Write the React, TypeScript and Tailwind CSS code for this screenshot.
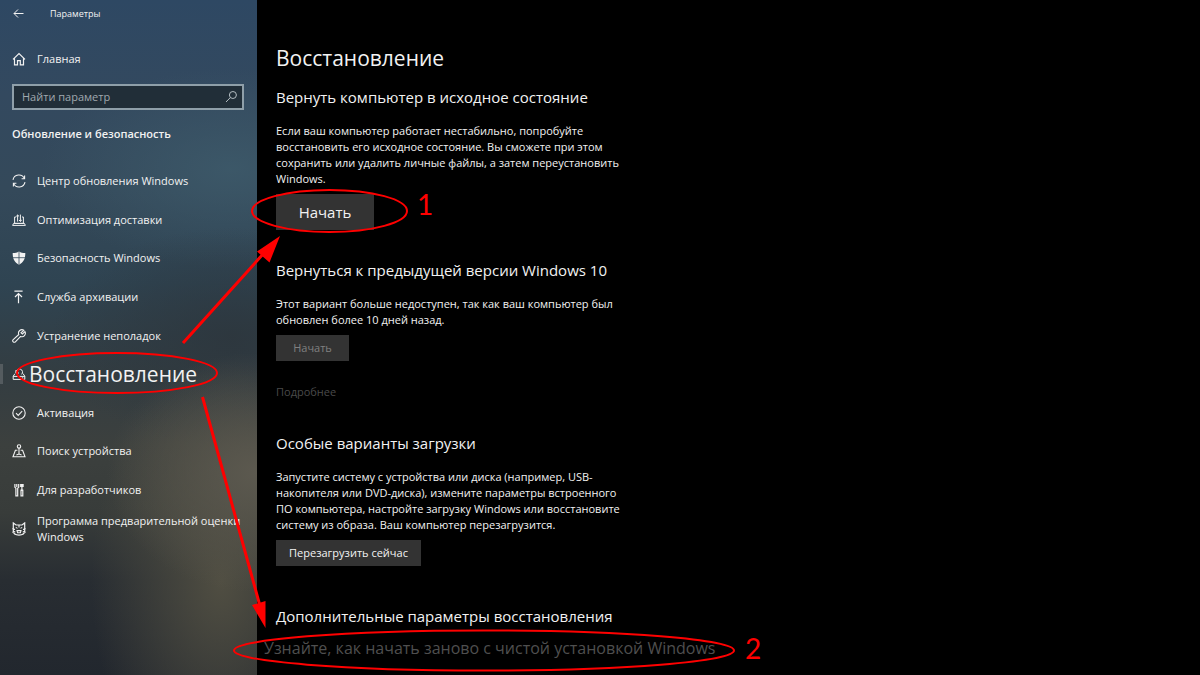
import React from 'react';

const Icon = ({ children, className = '' }: { children: React.ReactNode; className?: string }) => (
  <svg
    viewBox="0 0 14 14"
    fill="none"
    stroke="currentColor"
    strokeWidth="1"
    className={`h-3.5 w-3.5 shrink-0 ${className}`}
    aria-hidden="true"
  >
    {children}
  </svg>
);

const BackIcon = () => (
  <Icon>
    <path d="M11.500 6.500H2M6 2.500l-4 4 4 4" />
  </Icon>
);

const HomeIcon = () => (
  <Icon>
    <path d="M1 7.4L7 1.6l6 5.8M2.500 6.200v6.600h3V8.600h2.800v4.200h3.200V6.200" strokeWidth="1.200" />
  </Icon>
);

const SearchIcon = () => (
  <Icon className="text-[#b4bdc2]">
    <circle cx="8.900" cy="5" r="3.500" />
    <path d="M6.400 7.500L2 12" />
  </Icon>
);

const SyncIcon = () => (
  <Icon>
    <path d="M1 5.8A6 6 0 0 1 12.4 4.6M12.6 1.6v3.2H9.6M13 8.2A6 6 0 0 1 1.6 9.4M1.4 12.4V9.2h3" strokeWidth="1.1" />
  </Icon>
);

const DeliveryIcon = () => (
  <Icon>
    <path d="M4 4H2.6v6.4h8.8V4H10M0.6 12.4h12.8l-1-2H1.6zM5.6 8.6V2M4.2 3.4L5.6 2 7 3.4M8.4 1.6v6.8M7 7l1.4 1.4L9.8 7" />
  </Icon>
);

const ShieldIcon = () => (
  <Icon>
    <path
      d="M7 .4c1.800 1.200 3.800 1.600 6.300 1.700 0 5.400-1.400 9-6.300 11.600C2.100 11.100.7 7.500.7 2.100 3.200 2 5.200 1.600 7 .4z"
      fill="currentColor"
      stroke="none"
    />
    <path d="M7 .6v13M1 6.700h12" stroke="#34495a" strokeWidth="0.8" />
  </Icon>
);

const BackupIcon = () => (
  <Icon>
    <path d="M2.4 1.200h8.200M6.500 13.200V3.600M3 7l3.500-3.500L10 7" strokeWidth="1.2" />
  </Icon>
);

const WrenchIcon = () => (
  <Icon>
    <path
      d="M11.800 1.300a3.400 3.400 0 0 0-5 4.200L1.200 10.600a1.500 1.500 0 0 0 2.200 2.200L8.600 7.400a3.400 3.400 0 0 0 4.300-4.800L10.400 5 9 3.800z"
      strokeWidth="1.1"
    />
  </Icon>
);

const RecoveryIcon = () => (
  <Icon>
    <path d="M3 6.600L1.200 9.200v3.200h11.600V9.200L11 6.600M1.200 9.400h11.600M4.200 5.800a3.200 3.200 0 1 1 5.400 1.600M4 3v3h3M9.800 10.900h1.400" />
  </Icon>
);

const ActivationIcon = () => (
  <Icon>
    <circle cx="7" cy="7" r="6.200" strokeWidth="1.100" />
    <path d="M4 7.200l2.200 2.200 4-4.200" strokeWidth="1.100" />
  </Icon>
);

const FindDeviceIcon = () => (
  <Icon>
    <circle cx="7" cy="2.400" r="1.700" strokeWidth="1.100" />
    <path d="M7 4.100v6M5.400 6.200H3.400L1 12.800h12L10.600 6.200h-2M4.400 11l2.600-1 2.600 1" strokeWidth="1.100" />
  </Icon>
);

const DeveloperIcon = () => (
  <Icon>
    <path d="M2.900 1v3.200l1 1v7.600h1.800V5.200l1-1V1M4.800 1v3" strokeWidth="1.200" />
    <path d="M9.900 1v6M8.500 7h2.800M9 7.500h1.800v5.300H9zM8.700 1.500h2.400v2H8.700z" strokeWidth="1.200" />
  </Icon>
);

// ninja cat head
const InsiderIcon = () => (
  <Icon>
    <path
      d="M1.300.9L4 3h6l2.700-2.100v7.900c0 2.600-2 4.300-5.700 4.300s-5.700-1.700-5.700-4.300zM.4 6.600l2.600.8M13.600 6.600l-2.600.8M.4 10.400l2.800-.8M13.600 10.400l-2.800-.8"
      strokeWidth="1.200"
    />
    <path d="M5 8.600h4l-.6 2.200H5.600zM3.800 5.400l1.700 1M10.200 5.400l-1.700 1M7 3v2.400" strokeWidth="1.100" />
  </Icon>
);

interface NavItem {
  label: string;
  icon: React.FC;
  active?: boolean;
}

const navItems: NavItem[] = [
  { label: 'Центр обновления Windows', icon: SyncIcon },
  { label: 'Оптимизация доставки', icon: DeliveryIcon },
  { label: 'Безопасность Windows', icon: ShieldIcon },
  { label: 'Служба архивации', icon: BackupIcon },
  { label: 'Устранение неполадок', icon: WrenchIcon },
  { label: 'Восстановление', icon: RecoveryIcon, active: true },
  { label: 'Активация', icon: ActivationIcon },
  { label: 'Поиск устройства', icon: FindDeviceIcon },
  { label: 'Для разработчиков', icon: DeveloperIcon },
  { label: 'Программа предварительной оценки\nWindows', icon: InsiderIcon },
];

const Sidebar = () => (
  <aside className="w-[257px] shrink-0 bg-[radial-gradient(ellipse_150px_120px_at_100%_70%,#5c594f,#5c594f00),radial-gradient(ellipse_130px_220px_at_86%_86%,#504e42,#504e4200),radial-gradient(ellipse_180px_110px_at_90%_50%,#2c353ccc,#2c353c00),radial-gradient(ellipse_190px_100px_at_90%_25%,#3e5b6bcc,#3e5b6b00),linear-gradient(180deg,#2e4863_0%,#33495f_14%,#34495a_28%,#2f4452_42%,#333d42_55%,#3c403e_66%,#383c3a_76%,#282d32_86%,#22272e_100%)]">
    <header className="flex h-[27px] items-center gap-6 pl-3">
      <button aria-label="Назад">
        <BackIcon />
      </button>
      <span className="text-[9px]">Параметры</span>
    </header>
    <a href="#home" className="mt-5 flex h-6 items-center gap-[11px] pl-3">
      <HomeIcon />
      Главная
    </a>
    <label className="mt-[13px] mr-[13px] ml-3 flex h-[26px] items-center border-2 border-[#8f9fa9] bg-[#212e38] pr-1 pl-2">
      <input
        type="text"
        placeholder="Найти параметр"
        aria-label="Найти параметр"
        className="min-w-0 flex-1 bg-transparent outline-none placeholder:text-[#a0a9af]"
      />
      <SearchIcon />
    </label>
    <h2 className="mt-4 pl-3 leading-4 font-semibold">Обновление и безопасность</h2>
    <nav className="mt-5 grid h-[386px] auto-rows-fr">
      {navItems.map(({ label, icon: ItemIcon, active }) => (
        <a
          key={label}
          href="#section"
          className={`flex items-center pl-3 leading-4 whitespace-pre ${
            active ? 'relative gap-[3px] text-[21px]' : 'gap-[11px]'
          }`}
        >
          {active && <span className="absolute left-0 h-5 w-[3px] bg-[#545b5f]" />}
          <ItemIcon />
          {label}
        </a>
      ))}
    </nav>
  </aside>
);

interface SectionProps {
  title: string;
  text: string;
  className?: string;
  children: React.ReactNode;
}

const Section = ({ title, text, className = '', children }: SectionProps) => (
  <section className={className}>
    <h2 className="text-[15px] leading-6">{title}</h2>
    <p className="mt-3.5 mb-[7px] leading-4 whitespace-pre-line">{text}</p>
    {children}
  </section>
);

const Content = () => (
  <main className="min-w-0 flex-1 pt-[42px] pl-[19px]">
    <h1 className="text-[21px] leading-8">Восстановление</h1>
    <Section
      className="mt-[11px]"
      title="Вернуть компьютер в исходное состояние"
      text={
        'Если ваш компьютер работает нестабильно, попробуйте\nвосстановить его исходное состояние. Вы сможете при этом\nсохранить или удалить личные файлы, а затем переустановить\nWindows.'
      }
    >
      <button className="block h-9 w-[98px] bg-[#333333] text-[15px]">Начать</button>
    </Section>
    <Section
      className="mt-7"
      title="Вернуться к предыдущей версии Windows 10"
      text={'Этот вариант больше недоступен, так как ваш компьютер был\nобновлен более 10 дней назад.'}
    >
      <button disabled className="block h-[26px] w-[73px] bg-[#333333] text-[#808080]">
        Начать
      </button>
      <a href="#more" className="mt-[23px] block leading-4 text-[#4a4a4a]">
        Подробнее
      </a>
    </Section>
    <Section
      className="mt-[31px]"
      title="Особые варианты загрузки"
      text={
        'Запустите систему с устройства или диска (например, USB-\nнакопителя или DVD-диска), измените параметры встроенного\nПО компьютера, настройте загрузку Windows или восстановите\nсистему из образа. Ваш компьютер перезагрузится.'
      }
    >
      <button className="block h-[26px] w-[145px] bg-[#333333]">Перезагрузить сейчас</button>
    </Section>
    <section className="mt-[38px]">
      <h2 className="text-[15px] leading-6">Дополнительные параметры восстановления</h2>
      <a href="#clean-install" className="mt-2 -ml-3 block text-base leading-6 text-[#4f4f4f]">
        Узнайте, как начать заново с чистой установкой Windows
      </a>
    </section>
  </main>
);

const Annotations = () => (
  <div className="pointer-events-none absolute top-0 left-0 font-['Lato',sans-serif] text-[28px] leading-8 text-[#ff0000]">
    <svg width="760" height="675" viewBox="0 0 760 675" fill="none" stroke="currentColor" aria-hidden="true">
      <g strokeWidth="2">
        <ellipse cx="329.500" cy="211" rx="77.500" ry="21" />
        <ellipse cx="117" cy="373" rx="100" ry="20" />
        <ellipse cx="484" cy="650.500" rx="250" ry="20" />
      </g>
      <path d="M183 343L264 253M202.500 397L260 606" strokeWidth="3" />
      <path d="M280 236L257 251.500 269.500 262.500zM265.500 628L252 605 265.500 601z" fill="currentColor" stroke="none" />
    </svg>
    <span className="absolute top-[188px] left-[417px]">1</span>
    <span className="absolute top-[632px] left-[745px]">2</span>
  </div>
);

export default function App() {
  return (
    <div className="relative flex min-h-screen overflow-hidden bg-black font-['Open_Sans','Noto_Sans',sans-serif] text-[11px] text-[#f2f2f2]">
      <Sidebar />
      <Content />
      <Annotations />
    </div>
  );
}
